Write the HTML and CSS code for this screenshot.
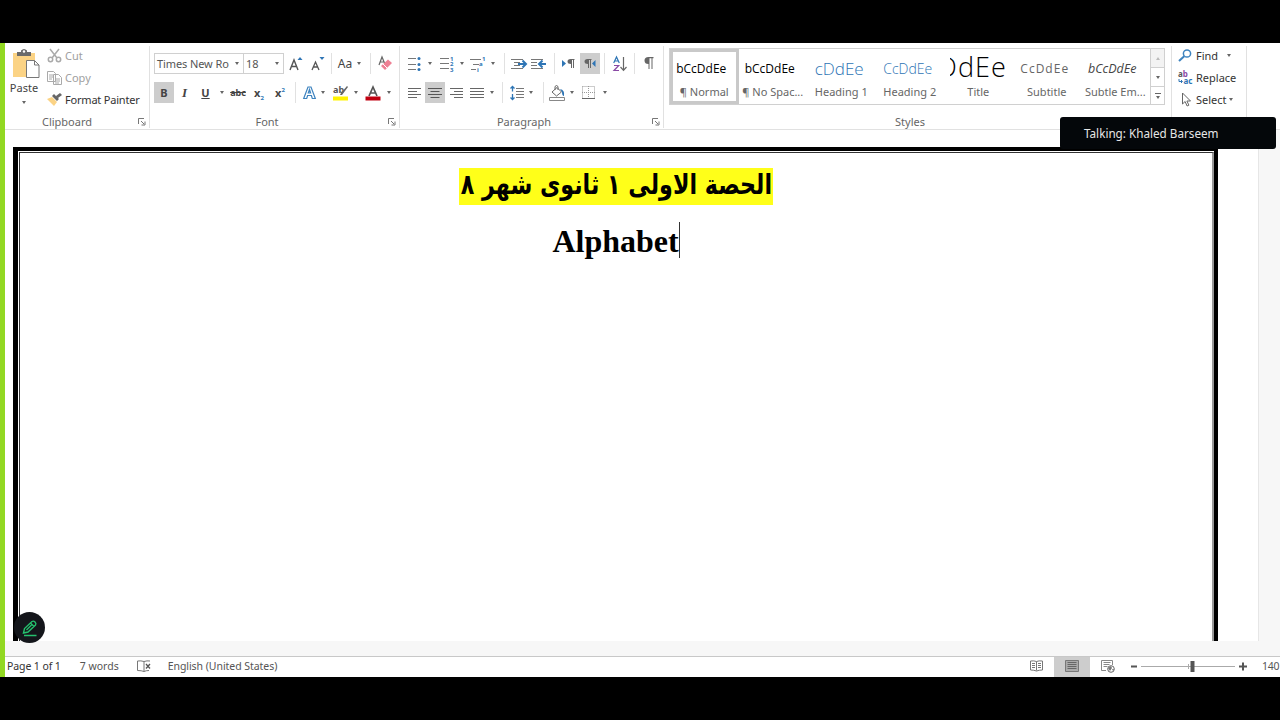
FILE: index.html
```html
<!DOCTYPE html>
<html lang="en">
    <head>
        <meta charset="utf-8">
        <title>Word</title>
        <link rel="stylesheet" href="styles.css">
    </head>
    <body>
    <div class="app">
      <div class="ribbon">
        <div class="group clipboard">
          <div class="group-body">
            <div class="paste">
              <svg width="28" height="30" viewBox="0 0 28 30"><path fill="#fbd385" d="M1 4h22v24H1z"/><path fill="#6b6b6b" d="M5 3h4V1.500Q12 -1.500 15 1.500V3h4v4H5z"/><circle cx="12" cy="2.500" r="1.200" fill="#fff"/><path fill="#fff" stroke="#777" d="M14.500 11.500h8l4.500 4.500v12.500H14.500zM22.500 11.500v4.500H27"/></svg>
              <span>Paste</span>
              <i class="caret"></i>
            </div>
            <div class="clip-list">
              <div class="off"><svg width="15" height="15" viewBox="0 0 15 15" fill="none" stroke="#aaa" stroke-width="1.500"><path d="M3 1l7 9M12 1L5 10"/><circle cx="3.500" cy="11.500" r="2.200"/><circle cx="11.500" cy="11.500" r="2.200"/></svg>Cut</div>
              <div class="off"><svg width="15" height="15" viewBox="0 0 15 15" fill="#fff" stroke="#aaa"><path d="M.5 1.500h6l2 2v8h-8zM2 5h4M2 7h4M2 9h3M6.500 4.500h5l3 3v7h-8zM8 9h5M8 11h5M8 13h4"/></svg>Copy</div>
              <div class="painter"><svg width="15" height="13" viewBox="0 0 15 13"><path fill="#fbd385" d="M0 6l5-2 5 5-3 4z"/><path fill="#666" d="M5 3l2-2 5 5-2 2zM9 3l4-3 2 2-4 3z"/></svg>Format Painter</div>
            </div>
          </div>
          <div class="group-name">Clipboard</div>
          <svg class="launch" width="8" height="8" viewBox="0 0 8 8"><path fill="none" stroke="#777" d="M.5 6V.5H6M3 3l3 3M7 3.500V7H3.500"/></svg>
        </div>

        <div class="group font">
          <div class="group-body">
            <div class="row font-top">
              <div class="combo"><span>Times New Ro</span><i class="caret"></i></div>
              <div class="combo size"><span>18</span><i class="caret"></i></div>
              <svg width="14" height="16" viewBox="0 0 14 16"><path fill="none" stroke="#555" stroke-width="1.400" d="M1 14L5 4l4 10M2.500 10.500h5"/><path fill="#2e75b5" d="M8.500 4L11 1l2.500 3z"/></svg>
              <svg width="14" height="16" viewBox="0 0 14 16"><path fill="none" stroke="#555" stroke-width="1.300" d="M1 14l3.500-8L8 14M2.500 11h4"/><path fill="#2e75b5" d="M8.500 1h5L11 4z"/></svg>
              <i class="sep"></i>
              <span class="case">Aa</span>
              <i class="caret"></i>
              <i class="sep"></i>
              <svg width="14" height="15" viewBox="0 0 14 15"><path fill="none" stroke="#666" stroke-width="1.200" d="M1 9l3-8 2.500 6M2 6h4"/><path fill="#ee8094" d="M10 3.500l4 3.500-7 7-4-4z"/><path stroke="#fff" d="M5 8l4 4"/></svg>
            </div>
            <div class="row font-bottom">
              <b class="on">B</b>
              <span class="ital">I</span>
              <span class="under">U</span>
              <i class="caret"></i>
              <s>abc</s>
              <span class="script">x<sub>2</sub></span>
              <span class="script">x<sup>2</sup></span>
              <i class="sep"></i>
              <svg width="13" height="14" viewBox="0 0 13 14"><path fill="none" stroke="#3d83bf" stroke-width="1.200" d="M.7 12.500L5 1h3l4.300 11.500h-3l-.9-3H4.600l-.9 3zM5.300 7h2.300L6.500 3.500z"/></svg>
              <i class="caret"></i>
              <svg width="17" height="16" viewBox="0 0 17 16"><text x="1" y="8" class="hl-text">ab</text><path fill="#666" d="M15 1l1 1-6 8H8l1-2z"/><path fill="#fff200" d="M1 11.500h15v4H1z"/></svg>
              <i class="caret"></i>
              <svg width="16" height="16" viewBox="0 0 16 16"><path fill="none" stroke="#555" stroke-width="1.700" d="M4 11L8 2l4 9M5.500 8h5"/><path fill="#c00010" d="M.5 11.500h15v4H.5z"/></svg>
              <i class="caret"></i>
            </div>
          </div>
          <div class="group-name">Font</div>
          <svg class="launch" width="8" height="8" viewBox="0 0 8 8"><path fill="none" stroke="#777" d="M.5 6V.5H6M3 3l3 3M7 3.500V7H3.500"/></svg>
        </div>

        <div class="group paragraph">
          <div class="group-body">
            <div class="row para-top">
              <svg width="14" height="16" viewBox="0 0 14 16"><path stroke="#777" d="M1 2.500h8M1 8.500h8M1 13.500h8"/><g fill="#2e75b5"><circle cx="12" cy="2.500" r="1.500"/><circle cx="12" cy="8.500" r="1.500"/><circle cx="12" cy="13.500" r="1.500"/></g></svg>
              <i class="caret"></i>
              <svg width="14" height="17" viewBox="0 0 14 17"><path stroke="#777" d="M0 3.500h9M0 8.500h9M0 13.500h9"/><g class="num"><text x="10" y="5.500">1</text><text x="10" y="11">2</text><text x="10" y="16.500">3</text></g></svg>
              <i class="caret"></i>
              <svg width="16" height="17" viewBox="0 0 16 17"><path stroke="#777" d="M0 4.500h11M3 9.500h6M1 14.500h5"/><g class="num"><text x="12" y="6">1</text><text x="9" y="11">a</text><text x="7" y="16.500">i</text></g></svg>
              <i class="caret"></i>
              <i class="sep"></i>
              <svg width="16" height="12" viewBox="0 0 16 12"><path stroke="#777" d="M0 1.500h12M3 4.500h6M3 7.500h6M0 10.500h12"/><path stroke="#2e75b5" stroke-width="2" fill="none" d="M7 6h8M11.500 2.500L15 6l-3.500 3.500"/></svg>
              <svg width="16" height="12" viewBox="0 0 16 12"><path stroke="#777" d="M0 1.500h12M0 4.500h6M0 7.500h6M0 10.500h12"/><path stroke="#2e75b5" stroke-width="2" fill="none" d="M15 6H8M11.500 2.500L8 6l3.500 3.500"/></svg>
              <i class="sep"></i>
              <svg width="13" height="10" viewBox="0 0 13 10"><path fill="#2e75b5" d="M0 1l4 3.500L0 8z"/><path fill="#666" d="M12.500 0v1H12v8h-1V1h-1v8H9V5Q5.500 5 5.500 2.500T8.500 0z"/></svg>
              <span class="on"><svg width="12" height="10" viewBox="0 0 12 10"><path fill="#2e75b5" d="M11.500 1L8 4.500 11.500 8z"/><path fill="#666" d="M7.500 0v1H7v8H6V1H5v8H4V5Q.5 5 .5 2.500T3.500 0z"/></svg></span>
              <i class="sep"></i>
              <svg width="14" height="16" viewBox="0 0 14 16"><path fill="none" stroke="#2e75b5" stroke-width="1.200" d="M.7 7L3.500 1l2.800 6M1.700 5h3.600"/><path fill="none" stroke="#8a4aa5" stroke-width="1.200" d="M1 9.500h4.700L1 14.500h5"/><path fill="none" stroke="#666" stroke-width="1.200" d="M10.500 1v13M7.500 11l3 3.300 3-3.300"/></svg>
              <i class="sep"></i>
              <svg width="10" height="13" viewBox="0 0 10 13"><path fill="#666" d="M9.500 0v1.200H8.500V12h-1V1.200h-2V12h-1V7Q.5 7 .5 3.500T4.500 0z"/></svg>
            </div>
            <div class="row para-bottom">
              <svg width="14" height="12" viewBox="0 0 14 12"><path stroke="#666" d="M0 1.500h13M0 4.500h9M0 7.500h13M0 10.500h9"/></svg>
              <span class="on"><svg width="14" height="12" viewBox="0 0 14 12"><path stroke="#555" d="M0 1.500h14M2.500 4.500h9M0 7.500h14M2.500 10.500h9"/></svg></span>
              <svg width="14" height="12" viewBox="0 0 14 12"><path stroke="#666" d="M0 1.500h13M4 4.500h9M0 7.500h13M4 10.500h9"/></svg>
              <svg width="14" height="12" viewBox="0 0 14 12"><path stroke="#666" d="M0 1.500h14M0 4.500h14M0 7.500h14M0 10.500h14"/></svg>
              <i class="caret"></i>
              <i class="sep"></i>
              <svg width="14" height="16" viewBox="0 0 14 16"><path stroke="#777" d="M6 3.500h8M6 6.500h8M6 9.500h8M6 12.500h8"/><path fill="none" stroke="#2e75b5" stroke-width="1.300" d="M2.500 1v5.500M.5 3.500l2-2 2 2M2.500 9v5.500M.5 12.500l2 2 2-2"/></svg>
              <i class="caret"></i>
              <i class="sep"></i>
              <svg width="16" height="16" viewBox="0 0 16 16"><path fill="#fff" stroke="#666" d="M3 7l5-4.500L12.500 7 7.500 11zM6 5V1.500Q7.500-.5 9 1.500V5"/><path fill="#2e75b5" d="M11 4q5 1 4 7-2 0-2-4z"/><path fill="#fff" stroke="#888" d="M.5 12.500h15v3H.5z"/></svg>
              <i class="caret"></i>
              <svg width="14" height="14" viewBox="0 0 14 14"><path fill="none" stroke="#999" stroke-dasharray="1 1" d="M.5.500h12v12M.5.500v12M6.500 0v12M0 6.500h13"/><path stroke="#666" d="M0 12.500h13"/></svg>
              <i class="caret"></i>
            </div>
          </div>
          <div class="group-name">Paragraph</div>
          <svg class="launch" width="8" height="8" viewBox="0 0 8 8"><path fill="none" stroke="#777" d="M.5 6V.5H6M3 3l3 3M7 3.500V7H3.500"/></svg>
        </div>

        <div class="group styles">
          <div class="group-body">
            <div class="gallery">
              <div class="style picked"><span class="sample">bCcDdEe</span><span>¶ Normal</span></div>
              <div class="style"><span class="sample">bCcDdEe</span><span>¶ No Spac...</span></div>
              <div class="style"><span class="sample head1">cDdEe</span><span>Heading 1</span></div>
              <div class="style"><span class="sample head2"><span>CcDdEe</span></span><span>Heading 2</span></div>
              <div class="style"><span class="sample title"><span>DdEe</span></span><span>Title</span></div>
              <div class="style"><span class="sample subtitle">CcDdEe</span><span>Subtitle</span></div>
              <div class="style"><span class="sample subtle">bCcDdEe</span><span>Subtle Em...</span></div>
              <div class="scroll">
                <div class="dim"><i class="caret up"></i></div>
                <div><i class="caret"></i></div>
                <div class="more"><i class="caret"></i></div>
              </div>
            </div>
          </div>
          <div class="group-name">Styles</div>
        </div>

        <div class="group editing">
          <div class="edit-list">
            <div><svg width="15" height="13" viewBox="0 0 15 13"><circle cx="9" cy="4.500" r="3.600" fill="none" stroke="#3d83bf" stroke-width="1.500"/><path stroke="#3d83bf" stroke-width="2" d="M6.200 7.200L1 12"/></svg>Find<i class="caret far"></i></div>
            <div><svg width="15" height="15" viewBox="0 0 15 15"><text x="0" y="6.500" class="rep">a<tspan class="pur">b</tspan></text><text x="5.500" y="14" class="rep blue">ac</text><path fill="none" stroke="#2e75b5" d="M1 9v2.500h3M3 10l1.500 1.500L3 13"/></svg>Replace</div>
            <div><svg width="15" height="15" viewBox="0 0 15 15"><path fill="#fff" stroke="#666" d="M4.500 1v11l2.600-2.500 2 4.500 1.800-.8-2-4.200h3.600z"/></svg>Select<i class="caret near"></i></div>
          </div>
        </div>
      </div>

      <div class="workspace">
        <div class="page">
          <div class="frame">
            <div class="sheet">
              <p class="lesson" lang="ar" dir="rtl"><mark><span>الحصة الاولى ١ ثانوى شهر ٨</span></mark></p>
              <p class="alphabet">Alphabet</p>
            </div>
          </div>
        </div>
      </div>

      <div class="status">
        <span class="pages">Page 1 of 1</span>
        <span class="words">7 words</span>
        <svg class="proof" width="14" height="12" viewBox="0 0 14 12"><path fill="none" stroke="#777" d="M7 1.500Q4 .5 .5 1v9.500q4 0 6.500 1zM7 1.500Q10 .5 13 1M7 11.500q2-1 5-1"/><path stroke="#555" stroke-width="1.300" d="M9 4l4 4.500M13 4L9 8.500"/></svg>
        <span class="lang">English (United States)</span>
        <div class="views">
          <div><svg width="13" height="12" viewBox="0 0 13 12"><path fill="none" stroke="#777" d="M6.500 1.500Q4 .5.500 1v9q3.500 0 6 1 2.500-1 6-1V1Q9 .5 6.500 1.500zv9M2 3.500h3M2 5.500h3M2 7.500h3M8 3.500h3M8 5.500h3M8 7.500h3"/></svg></div>
          <div class="on"><svg width="14" height="12" viewBox="0 0 14 12"><path fill="#aaa" stroke="#777" d="M.5.500h13v11H.5z"/><path stroke="#666" d="M2.500 2.500h9M2.500 4.500h9M2.500 6.500h9M2.500 8.500h9"/></svg></div>
          <div><svg width="14" height="13" viewBox="0 0 14 13"><path fill="none" stroke="#888" d="M5 10.500H.5v-10h11V5M2.500 2.500h7M2.500 4.500h6M2.500 6.500h4"/><circle cx="10" cy="9" r="3.300" fill="#fff" stroke="#666"/><path fill="#777" d="M7 8l3-2 1 2-2 3zM11 9l2 0-1 2z"/></svg></div>
        </div>
        <svg class="zoom" width="118" height="12" viewBox="0 0 118 12"><path stroke="#555" stroke-width="2" d="M1 6.500h6M109 6.500h8M113 2.500v8"/><path stroke="#aaa" d="M11 6.500h94M58.500 4v5"/><path fill="#555" d="M60.500 1h4v11h-4z"/></svg>
        <span class="percent">140</span>
      </div>

      <div class="talking">Talking: Khaled Barseem</div>
      <div class="pen"><svg width="16" height="18" viewBox="0 0 16 18"><path fill="none" stroke="#25c06d" stroke-width="1.400" d="M1.500 14l1-4.500 7.500-7q1.500-1 3 .5t.5 3L6 13zM8.500 4l3.500 3.500M4.500 11l5-5M2 16.500h12.500"/></svg></div>
    </div>
    </body>
</html>
```
FILE: styles.css
```css
body { margin: 0; padding: 43px 0; background: #000; font-family: "Noto Sans", "Open Sans", sans-serif; font-size: 11px; color: #444; overflow: hidden; }
p { margin: 0; }
svg { display: block; flex: none; overflow: visible; }
.app { height: 634px; box-sizing: border-box; border-left: 5px solid #92d822; background: #fff; position: relative; display: flex; flex-direction: column; overflow: hidden; white-space: nowrap; }

/* ribbon */
.ribbon { height: 86px; flex: none; display: flex; border-bottom: 1px solid #e1e1e1; }
.group { height: 82px; margin-top: 3px; box-sizing: border-box; border-right: 1px solid #e1e1e1; position: relative; display: flex; flex-direction: column; }
.group-body { height: 67px; flex: none; }
.group-name { text-align: center; line-height: 18px; color: #666; }
.launch { position: absolute; right: 3px; bottom: 2px; }
.clipboard { width: 145px; }
.clipboard .group-name { padding-right: 20px; }
.font { width: 250px; }
.font .group-name { padding-right: 15px; }
.paragraph { width: 264px; }
.paragraph .group-name { padding-right: 15px; }
.styles { width: 508px; }
.styles .group-name { padding-right: 15px; }
.editing { width: 75px; }

.caret { display: block; flex: none; width: 0; border: 2.5px solid transparent; border-top: 3px solid #666; border-bottom: 0; }
.caret.up { border-top: 0; border-bottom: 3px solid #bbb; }
.sep { width: 1px; height: 21px; background: #e1e1e1; }
.on { background: #cdcdcd; }

.clipboard .group-body { display: flex; }
.paste { width: 38px; padding-top: 3px; display: flex; flex-direction: column; align-items: center; }
.paste svg { margin-left: 3px; }
.paste span { line-height: 16px; margin: 1px 0 5px; }
.clip-list { margin: -2px 0 0 4px; }
.clip-list div { display: flex; align-items: center; height: 22px; gap: 3px; color: #333; }
.clip-list .off { color: #a0a0a0; }
.clip-list .painter { letter-spacing: -.2px; }

.row { display: grid; align-items: center; justify-items: center; height: 21px; padding-left: 4px; }
.font-top, .para-top { padding-top: 7px; }
.font-bottom, .para-bottom { padding-top: 8px; }
.row .on { width: 100%; height: 21px; display: flex; align-items: center; justify-content: center; }
.font-top { grid-template-columns: 90px 40px 24px 20px 6px 22px 5px 19px 10px; }
.font-bottom { grid-template-columns: 20px 21px 21px 12px 20px 22px 20px 10px 19px 8px 26px 6px 28px 4px; }
.combo { width: 100%; height: 21px; box-sizing: border-box; border: 1px solid #d0d0d0; padding: 0 4px 0 2px; display: flex; align-items: center; justify-content: space-between; color: #555; letter-spacing: -.1px; }
.combo.size { border-left: 0; }
.case { font-size: 12px; }
.ital { font: italic 700 13px "Liberation Serif", serif; }
.under { font-weight: 700; text-decoration: underline; }
.font-bottom s { font-weight: 700; font-size: 9px; }
.script { font-weight: 700; font-size: 11px; line-height: 12px; }
.script sub, .script sup { font-size: 6px; line-height: 0; color: #2e75b5; }
.hl-text { font: 700 9px "Noto Sans", sans-serif; fill: #555; }
.num { font: 700 6px "Noto Sans", sans-serif; fill: #2e75b5; }

.para-top { grid-template-columns: 20px 12px 22px 8px 24px 6px 16px 14px 26px 4px 24px 20px 9px 22px 6px 24px; }
.para-bottom { grid-template-columns: 21px 20px 23px 18px 11px 10px 19px 10px 14px 14px 16px 17px 16px; }

/* style gallery */
.styles .group-body { padding: 2px 0 0 5px; box-sizing: border-box; }
.gallery { width: 496px; height: 57px; box-sizing: border-box; border: 1px solid #d0d0d0; display: flex; }
.style { width: 68.5px; height: 55px; box-sizing: border-box; padding: 3px 0; display: flex; flex-direction: column; align-items: center; color: #666; }
.style.picked { border: 3px solid #c9c9c9; padding: 0; }
.sample { height: 32px; margin: 1px 6px -2px 0; display: flex; align-items: center; color: #000; font: 12px/32px "Open Sans", sans-serif; }
.style > span:last-child { line-height: 17px; }
.head1 { font-size: 17px; font-weight: 300; color: #2e75b5; margin-right: 4px; }
.head2 { font-size: 14px; font-weight: 300; color: #2e75b5; width: 51px; overflow: hidden; justify-content: flex-end; }
.title { font-size: 27px; font-weight: 300; width: 57px; height: 25px; margin: 4px 0 2px; line-height: 25px; letter-spacing: 1px; overflow: hidden; justify-content: flex-end; }
.title span { margin-top: -5px; }
.subtitle { color: #666; letter-spacing: 1px; margin-right: 4px; }
.subtle { font-style: italic; font-size: 12.5px; color: #444; }
.scroll { margin-left: auto; width: 13px; border-left: 1px solid #d0d0d0; }
.scroll div { height: 18px; display: flex; flex-direction: column; align-items: center; justify-content: center; border-bottom: 1px solid #d0d0d0; }
.scroll .dim { background: #f3f3f3; }
.scroll .more { height: 17px; border: 0; }
.more::before { content: ""; width: 6px; height: 1px; background: #666; margin-bottom: 2px; }

.edit-list { margin-top: -2px; padding-left: 6px; color: #333; }
.edit-list div { display: flex; align-items: center; height: 22px; gap: 3px; }
.edit-list .far { margin-left: 6px; }
.edit-list .near { margin-left: -1px; }
.rep { font: 700 8px "Noto Sans", sans-serif; fill: #555; }
.rep .pur { fill: #8a4aa5; }
.rep.blue { fill: #2e75b5; }

/* document */
.workspace { flex: 1; background: #f7f7f7; overflow: hidden; }
.page { width: 1254px; height: 511px; box-sizing: border-box; padding: 17px 40px 0 8px; background: #fff; border-right: 1px solid #e6e6e6; }
.frame { height: 494px; box-sizing: border-box; border: 4px solid #000; border-left-width: 5px; border-bottom: 0; padding: 1px 0 0 1px; }
.sheet { height: 489px; box-sizing: border-box; border: 1px solid #333; border-right: 2px solid #999; border-bottom: 0; padding-top: 15px; display: flex; flex-direction: column; align-items: center; color: #000; }
mark { display: flex; align-items: center; justify-content: center; width: 314px; height: 37px; background: #ffff19; color: #000; font: 700 28px/33px "DejaVu Sans", sans-serif; }
mark span { transform: translateY(-2px) scaleX(.793); }
.alphabet { margin-top: 17px; height: 36px; border-right: 1px solid #333; font: 700 32px/38px "Liberation Serif", serif; }

/* status bar */
.status { height: 20px; flex: none; border-top: 1px solid #c8c8c8; display: flex; align-items: center; color: #555; font-size: 10.5px; line-height: 18px; }
.status span { padding-bottom: 2px; }
.pages { margin-left: 2px; color: #333; letter-spacing: -.1px; }
.words { margin-left: 19px; }
.proof { margin: 0 17px 2px 18px; }
.lang { letter-spacing: -.05px; }
.views { margin-left: auto; display: flex; height: 20px; }
.views div { width: 36px; display: flex; align-items: center; justify-content: center; }
.views svg, .zoom { margin-bottom: 2px; }
.zoom { margin-left: 4px; }
.percent { margin-left: 14px; width: 18px; letter-spacing: -.2px; }

.talking { position: absolute; left: 1055px; top: 74px; width: 216px; height: 32px; box-sizing: border-box; padding-left: 24px; border-radius: 3px; background: #04070a; color: #e6e6e6; line-height: 32px; font-size: 11.7px; }
.pen { position: absolute; left: 9px; top: 569px; width: 31px; height: 31px; border-radius: 50%; background: #14161b; display: flex; align-items: center; justify-content: center; }
```
